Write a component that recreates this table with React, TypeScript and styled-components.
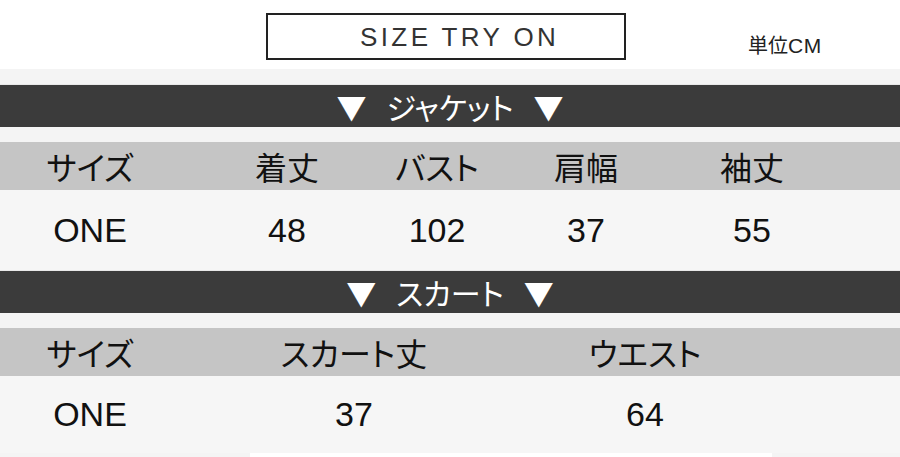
import styled, { createGlobalStyle } from 'styled-components';

const GlobalStyle = createGlobalStyle`
  html, body {
    margin: 0;
    padding: 0;
    background: #f4f4f4;
  }
`;

const jp = `"Noto Sans CJK JP", "Noto Sans", sans-serif`;
const latin = `"Liberation Sans", Arial, "Noto Sans CJK JP", sans-serif`;

const Page = styled.div`
  width: 900px;
  height: 457px;
  overflow: hidden;
  background: #f4f4f4;
  display: flex;
  flex-direction: column;
`;

const TopArea = styled.div`
  height: 70px;
  box-sizing: border-box;
  background: #fff;
  display: flex;
  align-items: flex-start;
  padding: 13px 0 0 266px;
  margin-bottom: 15px;
`;

const TitleBox = styled.div`
  width: 360px;
  height: 47px;
  box-sizing: border-box;
  border: 2px solid #222;
  padding-left: 92px;
  font-family: ${latin};
  font-size: 26px;
  letter-spacing: 3.4px;
  line-height: 45px;
  color: #333;
`;

const Unit = styled.div`
  margin: 21px 0 0 122px;
  font-family: ${jp};
  font-size: 20px;
  line-height: 22px;
  color: #222;
  font-feature-settings: "palt";
  span {
    font-family: ${latin};
    font-size: 21px;
    letter-spacing: 0.5px;
  }
`;

const SectionBar = styled.div`
  height: 42px;
  background: #3b3b3b;
  border-top: 1px solid #e8e8e8;
  display: flex;
  align-items: center;
  justify-content: center;
  gap: 20px;
  color: #fff;
  font-family: ${jp};
  font-size: 30px;
  font-feature-settings: "palt";
  margin-bottom: 15px;
`;

const Arrow = styled.span`
  font-size: 30px;
  line-height: 1;
`;

const Row = styled.div<{ $cols: string; $head?: boolean; $height: number }>`
  display: grid;
  grid-template-columns: ${(p) => p.$cols};
  align-items: center;
  height: ${(p) => p.$height}px;
  background: ${(p) => (p.$head ? '#c5c5c5' : '#f6f6f6')};
  color: #111;
  font-family: ${(p) => (p.$head ? jp : latin)};
  font-size: ${(p) => (p.$head ? 32 : 34)}px;
  font-feature-settings: "palt";
`;

const Cell = styled.div`
  text-align: center;
  white-space: nowrap;
`;

const Footer = styled.div`
  display: grid;
  grid-template-columns: 250px 522px;
  height: 4px;
  div + div {
    background: #fff;
  }
`;

type Section = {
  title: string;
  cols: string;
  head: string[];
  data: string[];
  dataHeight: number;
};

const sections: Section[] = [
  {
    title: 'ジャケット',
    cols: '180px 214px 86px 212px 120px',
    head: ['サイズ', '着丈', 'バスト', '肩幅', '袖丈'],
    data: ['ONE', '48', '102', '37', '55'],
    dataHeight: 80,
  },
  {
    title: 'スカート',
    cols: '180px 348px 234px',
    head: ['サイズ', 'スカート丈', 'ウエスト'],
    data: ['ONE', '37', '64'],
    dataHeight: 77,
  },
];

export default function App() {
  return (
    <>
      <GlobalStyle />
      <Page>
        <TopArea>
          <TitleBox>SIZE TRY ON</TitleBox>
          <Unit>
            単位<span>CM</span>
          </Unit>
        </TopArea>
        {sections.map((s) => (
          <div key={s.title}>
            <SectionBar>
              <Arrow>▼</Arrow>
              {s.title}
              <Arrow>▼</Arrow>
            </SectionBar>
            <Row $cols={s.cols} $head $height={48}>
              {s.head.map((h) => (
                <Cell key={h}>{h}</Cell>
              ))}
            </Row>
            <Row $cols={s.cols} $height={s.dataHeight}>
              {s.data.map((d, i) => (
                <Cell key={i}>{d}</Cell>
              ))}
            </Row>
          </div>
        ))}
        <Footer>
          <div />
          <div />
        </Footer>
      </Page>
    </>
  );
}
